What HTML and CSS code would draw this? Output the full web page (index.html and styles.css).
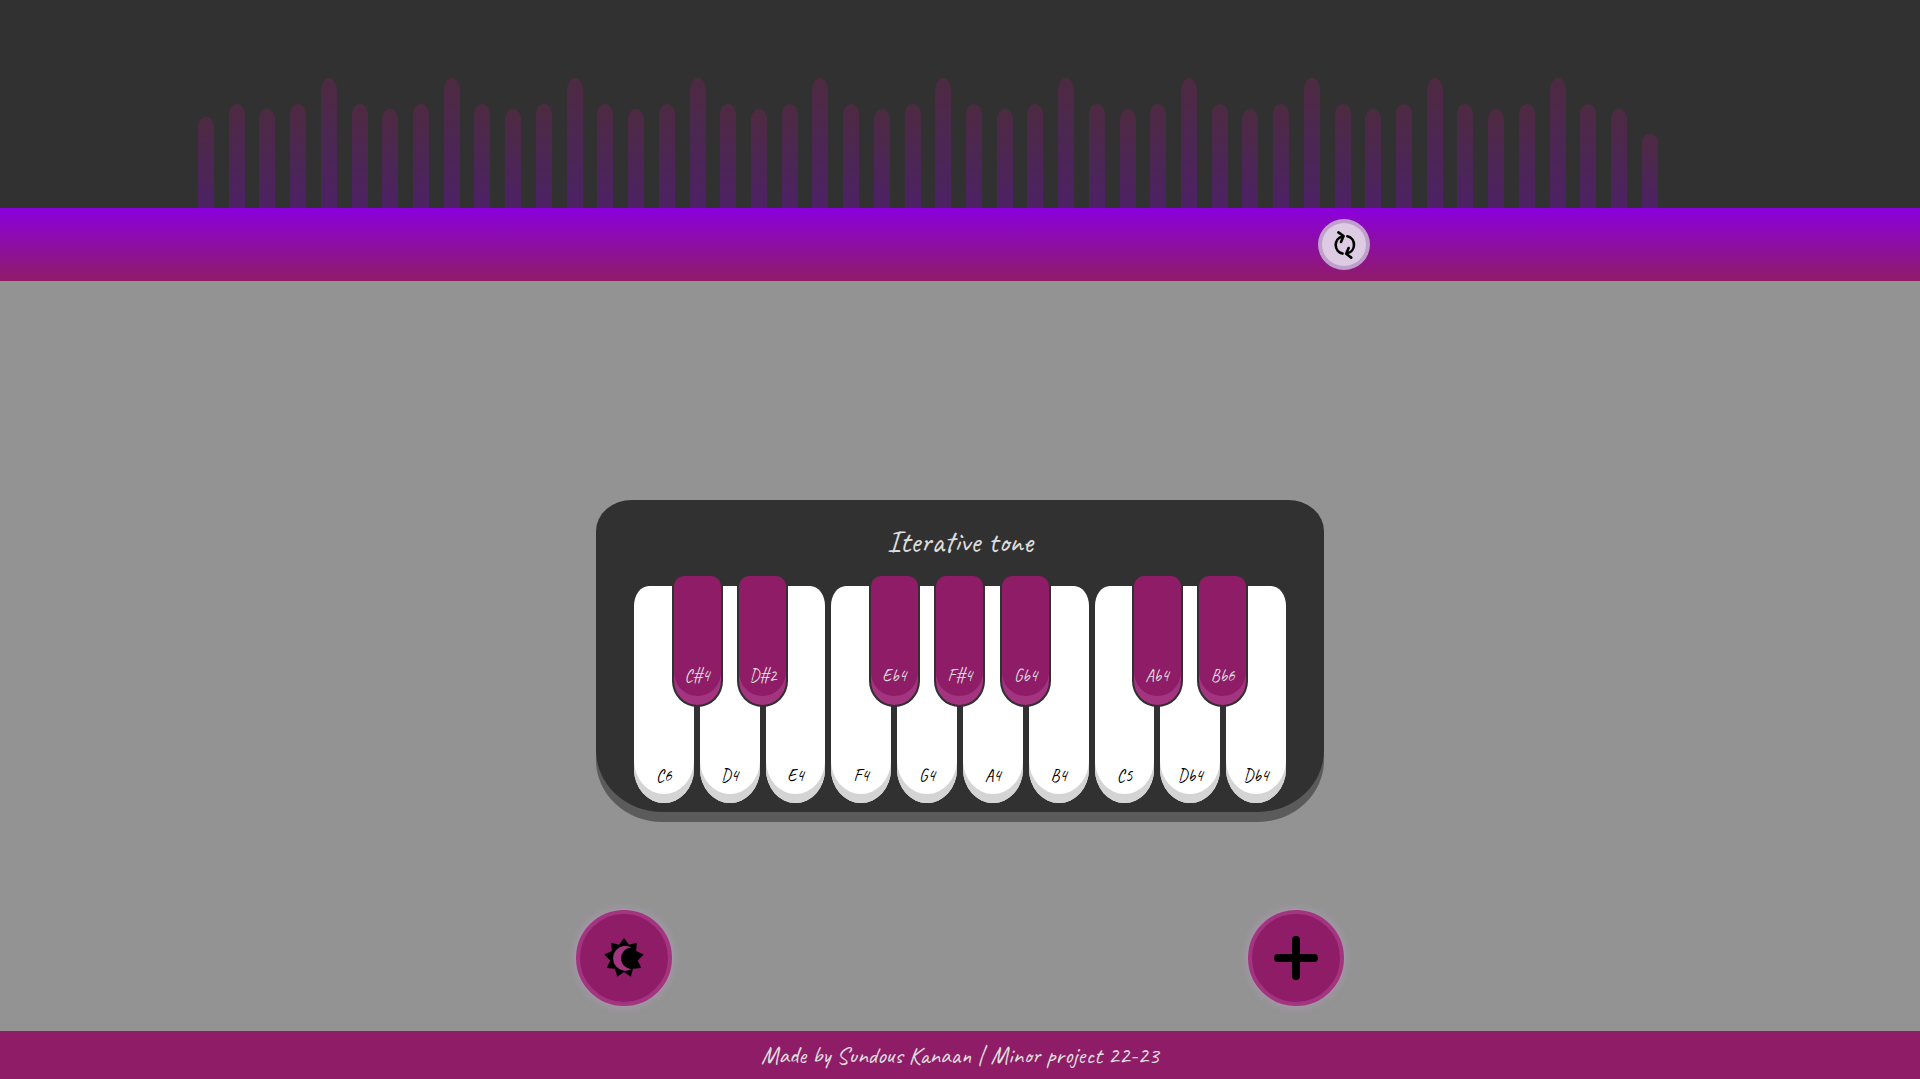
FILE: index.html
```html
<!DOCTYPE html>
<html lang="en">
<head>
<meta charset="utf-8">
<meta name="viewport" content="width=device-width, initial-scale=1">
<title>Iterative tone</title>
<link rel="stylesheet" href="styles.css">
</head>
<body>
<header class="header">
  <div class="visualizer" id="visualizer" aria-hidden="true"></div>
  <div class="toolbar">
    <button class="reset" type="button" aria-label="Reset">
      <svg width="24" height="28" viewBox="-1 0 24 28" fill="none" stroke="#000" stroke-width="2.6" stroke-linecap="round" stroke-linejoin="round">
        <path d="M9.4 5.4A8.6 8.8 0 0 0 9.6 22.6"/>
        <path d="M5.4 1.4L10.6 5L8 11"/>
        <path d="M14.4 5.2A8.6 8.8 0 0 1 14 22.4"/>
        <path d="M15.6 17L13.2 22.8L18.2 26.6"/>
      </svg>
    </button>
  </div>
</header>
<main class="main">
  <section class="piano">
    <h1 class="title">Iterative tone</h1>
    <div class="keys">
      <button class="key" type="button">C6</button>
      <button class="key" type="button">D4</button>
      <button class="key" type="button">E4</button>
      <button class="key" type="button">F4</button>
      <button class="key" type="button">G4</button>
      <button class="key" type="button">A4</button>
      <button class="key" type="button">B4</button>
      <button class="key" type="button">C5</button>
      <button class="key" type="button">Db4</button>
      <button class="key" type="button">Db4</button>
      <div class="sharps">
        <button class="sharp col-1" type="button">C#4</button>
        <button class="sharp col-2" type="button">D#2</button>
        <button class="sharp col-4" type="button">Eb4</button>
        <button class="sharp col-5" type="button">F#4</button>
        <button class="sharp col-6" type="button">Gb4</button>
        <button class="sharp col-8" type="button">Ab4</button>
        <button class="sharp col-9" type="button">Bb6</button>
      </div>
    </div>
  </section>
  <div class="actions">
    <button class="round" type="button" aria-label="Switch theme">
      <svg width="40" height="40" viewBox="0 0 40 40">
        <path d="M20 0L24.8 6.8L32.9 4.7L32.1 13L39.7 16.5L33.8 22.4L37.3 30L29 30.7L26.8 38.8L20 34L13.2 38.8L11 30.7L2.7 30L6.2 22.4L.3 16.5L7.9 13L7.1 4.7L15.2 6.8Z"/>
        <path fill="#a3347f" d="M27.7 9.6A12.4 12.4 0 1 0 27.7 31A10.7 10.7 0 1 1 27.7 9.6Z"/>
      </svg>
    </button>
    <button class="round" type="button" aria-label="Add">
      <svg width="44" height="44" viewBox="0 0 44 44" stroke="#000" stroke-width="8" stroke-linecap="round">
        <path d="M22 4V40M4 22H40"/>
      </svg>
    </button>
  </div>
</main>
<footer class="footer">Made by Sundous Kanaan | Minor project 22-23</footer>
<script src="script.js"></script>
</body>
</html>
```
FILE: styles.css
```css
* {
  box-sizing: border-box;
}

body {
  margin: 0;
  min-height: 100vh;
  display: flex;
  flex-direction: column;
  background: #939393;
  color: #ddd;
  font-family: "Caveat", "Lato", sans-serif;
}

button {
  font: inherit;
  padding: 0;
  border: 0;
  cursor: pointer;
}

svg {
  display: block;
}

.header {
  background: #313131;
}

.visualizer {
  height: 208px;
  padding: 0 262px 0 198px;
  display: flex;
  align-items: flex-end;
  justify-content: space-between;
}

.bar {
  width: 16px;
  height: 104px;
  border-radius: 50% 50% 0 0 / 10% 10% 0 0;
  background: linear-gradient(#8f1c67, #8b00dd);
  opacity: .3;
}

.bar.tall { height: 130px; }
.bar.short { height: 99px; }
.bar.first { height: 91px; }
.bar.last { height: 74px; }

.toolbar {
  height: 73px;
  padding: 0 550px;
  display: flex;
  align-items: center;
  justify-content: flex-end;
  background: linear-gradient(#8b00dd, #8f1c67);
}

.reset {
  width: 52px;
  height: 51px;
  display: grid;
  place-items: center;
  border: 4px solid #bfa0ca;
  border-radius: 50%;
  background: #ddcbe3;
}

.main {
  flex: 1;
  display: grid;
  grid-template-rows: 1fr auto 1fr;
  justify-items: center;
}

.piano {
  grid-row: 2;
  width: 728px;
  padding: 0 38px 9px;
  border-radius: 36px 36px 66px 66px / 31px 31px 62px 62px;
  background: #313131;
  box-shadow: 0 10px #5b5b5b;
}

.title {
  margin: 0;
  height: 86px;
  line-height: 84px;
  font-size: 31px;
  font-weight: 500;
  text-align: center;
}

.keys {
  position: relative;
  display: grid;
  grid-template-columns: repeat(10, 1fr);
  gap: 6px;
}

.key {
  height: 217px;
  padding-bottom: 16px;
  display: flex;
  align-items: flex-end;
  justify-content: center;
  border-radius: 15px 15px 50% 50% / 20px 20px 34px 34px;
  background: #fff;
  box-shadow: inset 0 -9px #d4d4d4;
  color: #000;
  font-size: 17px;
  line-height: 22px;
}

.sharps {
  position: absolute;
  top: -12px;
  left: 0;
  right: 0;
  display: grid;
  grid-template-columns: repeat(10, 1fr);
  gap: 5px;
  pointer-events: none;
}

.sharp {
  grid-row: 1;
  justify-self: center;
  width: 51px;
  height: 133px;
  padding-bottom: 18px;
  display: flex;
  align-items: flex-end;
  justify-content: center;
  border: 2px solid #313131;
  border-radius: 12px 12px 50% 50% / 12px 12px 26px 26px;
  background: #8f1c67;
  box-shadow: inset 0 -9px #a3347f;
  color: #ddd;
  font-size: 17px;
  font-weight: 500;
  line-height: 22px;
  pointer-events: auto;
}

.col-1 { grid-column: 1 / span 2; }
.col-2 { grid-column: 2 / span 2; }
.col-4 { grid-column: 4 / span 2; }
.col-5 { grid-column: 5 / span 2; }
.col-6 { grid-column: 6 / span 2; }
.col-8 { grid-column: 8 / span 2; }
.col-9 { grid-column: 9 / span 2; }

.actions {
  grid-row: 3;
  align-self: end;
  width: 40%;
  padding-bottom: 25px;
  display: flex;
  justify-content: space-between;
}

.round {
  width: 96px;
  height: 96px;
  display: grid;
  place-items: center;
  border: 4px solid #a3347f;
  border-radius: 50%;
  background: #8f1c67;
  box-shadow: 0 0 10px #b09cb8;
}

.footer {
  height: 48px;
  line-height: 48px;
  background: #8f1c67;
  font-size: 24px;
  font-weight: 500;
  text-align: center;
}
```
FILE: script.js
```js
// Bars repeat in groups of four, with a shorter one at each end.
const cycle = ["tall", "", "short", ""];
const count = 48;
const visualizer = document.getElementById("visualizer");

for (let i = 0; i < count; i++) {
  const bar = document.createElement("div");
  let size = cycle[i % 4];
  if (i === 0) size = "first";
  if (i === count - 1) size = "last";
  bar.className = ("bar " + size).trim();
  visualizer.appendChild(bar);
}
```
